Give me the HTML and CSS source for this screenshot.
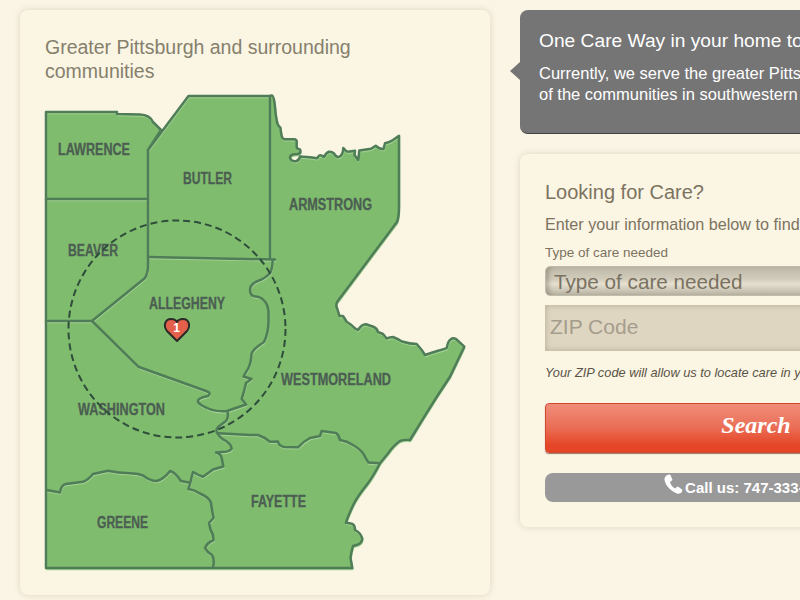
FILE: index.html
```html
<!DOCTYPE html>
<html lang="en">
<head>
<meta charset="utf-8">
<title>One Care Way</title>
<link rel="stylesheet" href="styles.css">
</head>
<body>
<div class="page">
	<section class="card map-card">
		<h2 class="map-title">Greater Pittsburgh and surrounding communities</h2>
		<svg class="map" width="440" height="490" viewBox="40 90 440 490">
			<defs>
				<path id="coast" d="M46 112 L117 112 L117 114 L140 114.5 Q150 115 153 122 L161 130 L148 150 L188.5 96 L270 96 L272 95.5 Q274 96 275 107 Q275.5 115 276.7 120 Q277 125 280.5 128 Q281 133 281.7 136 Q282 139 285 139.3 L294 139.3 Q297 139.5 296.7 142 L296.7 147 Q297 149 300 149.5 Q301.5 153 298 154 L293 154.5 Q289.5 155.5 290.2 158.5 Q292 162 296.5 161 Q299.5 160 300 156.5 L310 157.3 Q314 158 317.3 158.3 Q319 155 320.5 155.3 Q322.5 155.5 324 157 Q326 152.5 329 151.7 Q332 151.5 334 153.5 Q336.5 157.5 338.5 157 Q343 156 343.3 148 Q346 151.5 348 151.7 L355 150.7 L354.5 155 L358.3 160 L359.3 150.5 L371 148.8 L375.7 145.7 Q380 149.5 383.5 149 L385 143.3 Q390 142 393 140 L399 135.7 L399 206.7 Q399 217 397 222 L337.3 301.7 Q335.5 305 337 308 L339.5 316 L343 316 L346.7 321.7 Q352 325 355 328.3 L358 330 Q362 324 366 324.3 L373.3 326.7 Q377 328 378 332 L383 334 L386.7 338.5 Q390 337 393 337 Q398 339 402 341.5 Q410 344 416.7 344 L421.7 350 L425 355 Q432 352.5 438 350.7 Q445 349 446.7 348 Q448 341 450.5 339.5 Q453 337.5 456 339 L464.3 346.7 L450 376.7 Q437 396 423.3 418.3 L410 440 Q404 439.5 400 441 Q394 445 388 453.5 L380 463.3 Q373 477 366.7 485 Q357 497 353.3 505 Q348 516 346 522.7 L351 523.5 Q355 524 355 530 Q361 533 362.3 538.5 Q362 543 358 544.5 L353 546 Q351 553 350.5 558 L352.3 568 L46 568 Z"/>
				<g id="borders">
					<use href="#coast"/>
					<path d="M46 199 L148 199"/>
					<path d="M148 150 L148 262 Q148.5 272 145 278 L92 321 L46 321"/>
					<path d="M148 257 L275 259.5"/>
					<path d="M270 96 L270 259"/>
					<path d="M92 321 L138.3 366.7 L206 391 Q212 393 208 396 Q197 398 198 402 Q200 405 207 408 Q215 412 227 411 L246 404.5"/>
					<path d="M272.7 260 Q272.5 268 270 273 Q266 278 258 281 Q250 284 250 290 Q250 296.5 256 296.5 Q262 297 266 303 Q269 308 268.5 318 Q269 332 264 342 Q253 349 251.5 354 Q251 366 246 372 L243.5 376.5 L251.5 379 L246 383 Q244 392 241.7 399 L246 404.5"/>
					<path d="M227.3 411 Q229 417 226 421 L218 427 Q215 431 218 434 Q220 438 226 441 Q232 445 231.5 449 Q229 452 222 452 L216 452.5 Q221 454 221.7 458 L223.3 466.5 Q218 468 213 469.5 L203 476.7 Q198 475 193 472 Q191.5 477 190.5 482 L188.5 489 Q195 490 200 493.5 Q210 498 211 503 Q212 510 213.5 518 L209 523 Q210 530 213 535 L213.5 540 Q207 543 205 548 Q207 552 212 555 Q215 559 213 567.5"/>
					<path d="M218.3 433.3 L250 435 L258 435 Q264 437 270 441.7 L278 441.5 Q279 446 284 447 L298 447.3 Q304 441 310 438 L320 436 L321.7 431 L336 433 Q339 435 340 440 Q347 441 353 445 Q360 449 363.5 454 Q366 459 368.5 462.5 L380 463.3"/>
					<path d="M46.7 490 L60 492.5 Q61 485 66 484 L83 481.7 Q88 480 93 474 L108 470.7 Q118 473 130 473.3 L138 474 L143 475.5 Q150 481 157 481 Q164 479 170 471 Q175 472 181 481 L190 482.7"/>
				</g>
			</defs>
			<use class="land" href="#coast"/>
			<use class="border-glow" href="#borders" transform="translate(0.5 1.5)"/>
			<use class="border-line" href="#borders"/>
			<text class="county" x="94" y="155" textLength="72" lengthAdjust="spacingAndGlyphs">LAWRENCE</text>
			<text class="county" x="207.500" y="184" textLength="49" lengthAdjust="spacingAndGlyphs">BUTLER</text>
			<text class="county" x="330.500" y="210" textLength="83" lengthAdjust="spacingAndGlyphs">ARMSTRONG</text>
			<text class="county" x="93" y="256" textLength="50" lengthAdjust="spacingAndGlyphs">BEAVER</text>
			<text class="county" x="187" y="309" textLength="76" lengthAdjust="spacingAndGlyphs">ALLEGHENY</text>
			<text class="county" x="336" y="385" textLength="110" lengthAdjust="spacingAndGlyphs">WESTMORELAND</text>
			<text class="county" x="121.500" y="415" textLength="87" lengthAdjust="spacingAndGlyphs">WASHINGTON</text>
			<text class="county" x="122.500" y="528" textLength="51" lengthAdjust="spacingAndGlyphs">GREENE</text>
			<text class="county" x="278.500" y="507" textLength="55" lengthAdjust="spacingAndGlyphs">FAYETTE</text>
			<circle class="radius" cx="177" cy="329" r="108.5"/>
			<path class="heart" d="M177 341 L167 331 C163 326 165 319 171 319 C174 319 176 320 177 322 C178 320 180 319 183 319 C189 319 191 326 187 331 Z"/>
			<text class="heart-num" x="176.500" y="332">1</text>
		</svg>
	</section>
	<div class="side">
		<section class="callout">
			<h2 class="callout-title">One Care Way in your home town</h2>
			<p class="callout-text">Currently, we serve the greater Pittsburgh area and many<br>of the communities in southwestern Pennsylvania.</p>
		</section>
		<section class="card care-card">
			<h2 class="care-title">Looking for Care?</h2>
			<p class="care-intro">Enter your information below to find care near you.</p>
			<div class="field-label">Type of care needed</div>
			<div class="select-box">Type of care needed</div>
			<div class="zip-box">ZIP Code</div>
			<p class="hint">Your ZIP code will allow us to locate care in your area.</p>
			<div class="search-btn">Search</div>
			<div class="call-bar">
				<svg class="phone" width="20" height="20" viewBox="0 0 20 20">
					<path d="M4 1 L7 0.500 C8 2 9 4.500 9.500 6 L7 8 C7.500 10.500 9.500 13 12 14.500 L14.500 12.500 C16 13 18 14.500 19.500 16 L18.500 18.500 C17.500 19.500 15.500 20 14 19.500 C8 17.500 2.500 11.500 1.500 6 C1.200 4 2.500 2 4 1 Z"/>
				</svg>
				<span>Call us: 747-333-3333</span>
			</div>
		</section>
	</div>
</div>
</body>
</html>
```

FILE: styles.css
```css
html, body {
	margin: 0;
	padding: 0;
	height: 100%;
	overflow: hidden;
}
body {
	font-family: "Liberation Sans", Arial, sans-serif;
	background-color: #fbf5e6;
}
h2, p {
	margin: 0;
	font-weight: normal;
}
.page {
	display: flex;
	align-items: flex-start;
	gap: 30px;
	padding: 10px 0 0 20px;
	width: 1000px;
}
.card {
	box-sizing: border-box;
	background-color: #fbf5e4;
	border-radius: 8px;
	box-shadow: 0 0 7px rgba(120, 100, 60, 0.22);
}

/* map */
.map-card {
	flex: none;
	width: 470px;
	height: 585px;
	padding: 25px 20px 0 25px;
}
.map-title {
	width: 340px;
	height: 55px;
	font-size: 19.5px;
	line-height: 24px;
	color: #85806c;
}
.map {
	display: block;
	margin-left: -5px;
}
.land {
	fill: #7fbc6e;
}
.border-glow, .border-line {
	fill: none;
	stroke-linejoin: round;
	stroke-linecap: round;
}
.border-glow {
	stroke: #a4d494;
	stroke-width: 1.5;
}
.border-line {
	stroke: #4f7d57;
	stroke-width: 2.5;
}
.county {
	font-family: "Liberation Sans", sans-serif;
	font-size: 16px;
	font-weight: bold;
	fill: #4c5e52;
	stroke: #4c5e52;
	stroke-width: 0.3;
	text-anchor: middle;
}
.radius {
	fill: none;
	stroke: #2f4d3b;
	stroke-width: 2;
	stroke-dasharray: 7 4;
}
.heart {
	fill: #e4604a;
	stroke: #2a2a28;
	stroke-width: 2;
	stroke-linejoin: round;
}
.heart-num {
	font-size: 12px;
	font-weight: bold;
	fill: #fff;
	text-anchor: middle;
}

/* right column */
.side {
	flex: none;
	display: flex;
	flex-direction: column;
	gap: 20px;
	width: 472px;
}
.callout {
	position: relative;
	box-sizing: border-box;
	height: 124px;
	padding: 19px 19px 0;
	color: #fff;
	background-color: #757575;
	border-bottom: 1px solid #444;
	border-radius: 8px;
	white-space: nowrap;
}
.callout::before {
	content: "";
	position: absolute;
	left: -10px;
	top: 52px;
	border-style: solid;
	border-width: 9px 10px 9px 0;
	border-color: transparent #757575 transparent transparent;
}
.callout-title {
	font-size: 19.2px;
	line-height: 24px;
}
.callout-text {
	margin-top: 10px;
	font-size: 16.5px;
	line-height: 21px;
}
.care-card {
	height: 373px;
	padding: 26px 25px 0;
	white-space: nowrap;
}
.care-title {
	font-size: 20px;
	line-height: 24px;
	color: #7c735f;
}
.care-intro {
	margin-top: 10px;
	font-size: 16.2px;
	line-height: 20px;
	color: #7c735f;
}
.field-label {
	margin-top: 10px;
	font-size: 13.5px;
	line-height: 18px;
	color: #7c735f;
}
.select-box {
	box-sizing: border-box;
	height: 30px;
	margin-top: 4px;
	padding-left: 8px;
	font-size: 20.7px;
	line-height: 29px;
	color: #7a7262;
	border: 1px solid #c2bcab;
	border-radius: 5px;
	background: linear-gradient(#bdb7a7, #d3cdbd 45%, #e6e0d0 60%, #b9b3a3);
	box-shadow: inset 5px 0 4px -2px rgba(90, 85, 70, 0.35);
}
.zip-box {
	box-sizing: border-box;
	height: 46px;
	margin-top: 9px;
	padding-left: 5px;
	font-size: 21px;
	line-height: 44px;
	color: #a59d8c;
	background-color: #dfd6c2;
	box-shadow: inset 0 0 6px rgba(120, 105, 75, 0.4);
}
.hint {
	margin-top: 13px;
	font-size: 12.8px;
	line-height: 17px;
	font-style: italic;
	color: #5a5446;
}
.search-btn {
	box-sizing: border-box;
	height: 50px;
	margin-top: 22px;
	font-family: "Liberation Serif", serif;
	font-size: 24px;
	font-weight: bold;
	font-style: italic;
	line-height: 42px;
	text-align: center;
	color: #fff;
	border: 1px solid #d0492f;
	border-radius: 4px;
	background: linear-gradient(#f08d7a, #ea6d55 50%, #e54627 85%);
	box-shadow: 0 1px 1px rgba(90, 40, 20, 0.6);
}
.call-bar {
	box-sizing: border-box;
	display: flex;
	justify-content: center;
	align-items: center;
	gap: 2px;
	height: 29px;
	margin-top: 20px;
	padding-right: 12px;
	font-size: 15px;
	font-weight: bold;
	color: #fff;
	background-color: #999;
	border-radius: 8px;
}
.phone {
	margin-top: -7px;
	fill: #fff;
}
```
